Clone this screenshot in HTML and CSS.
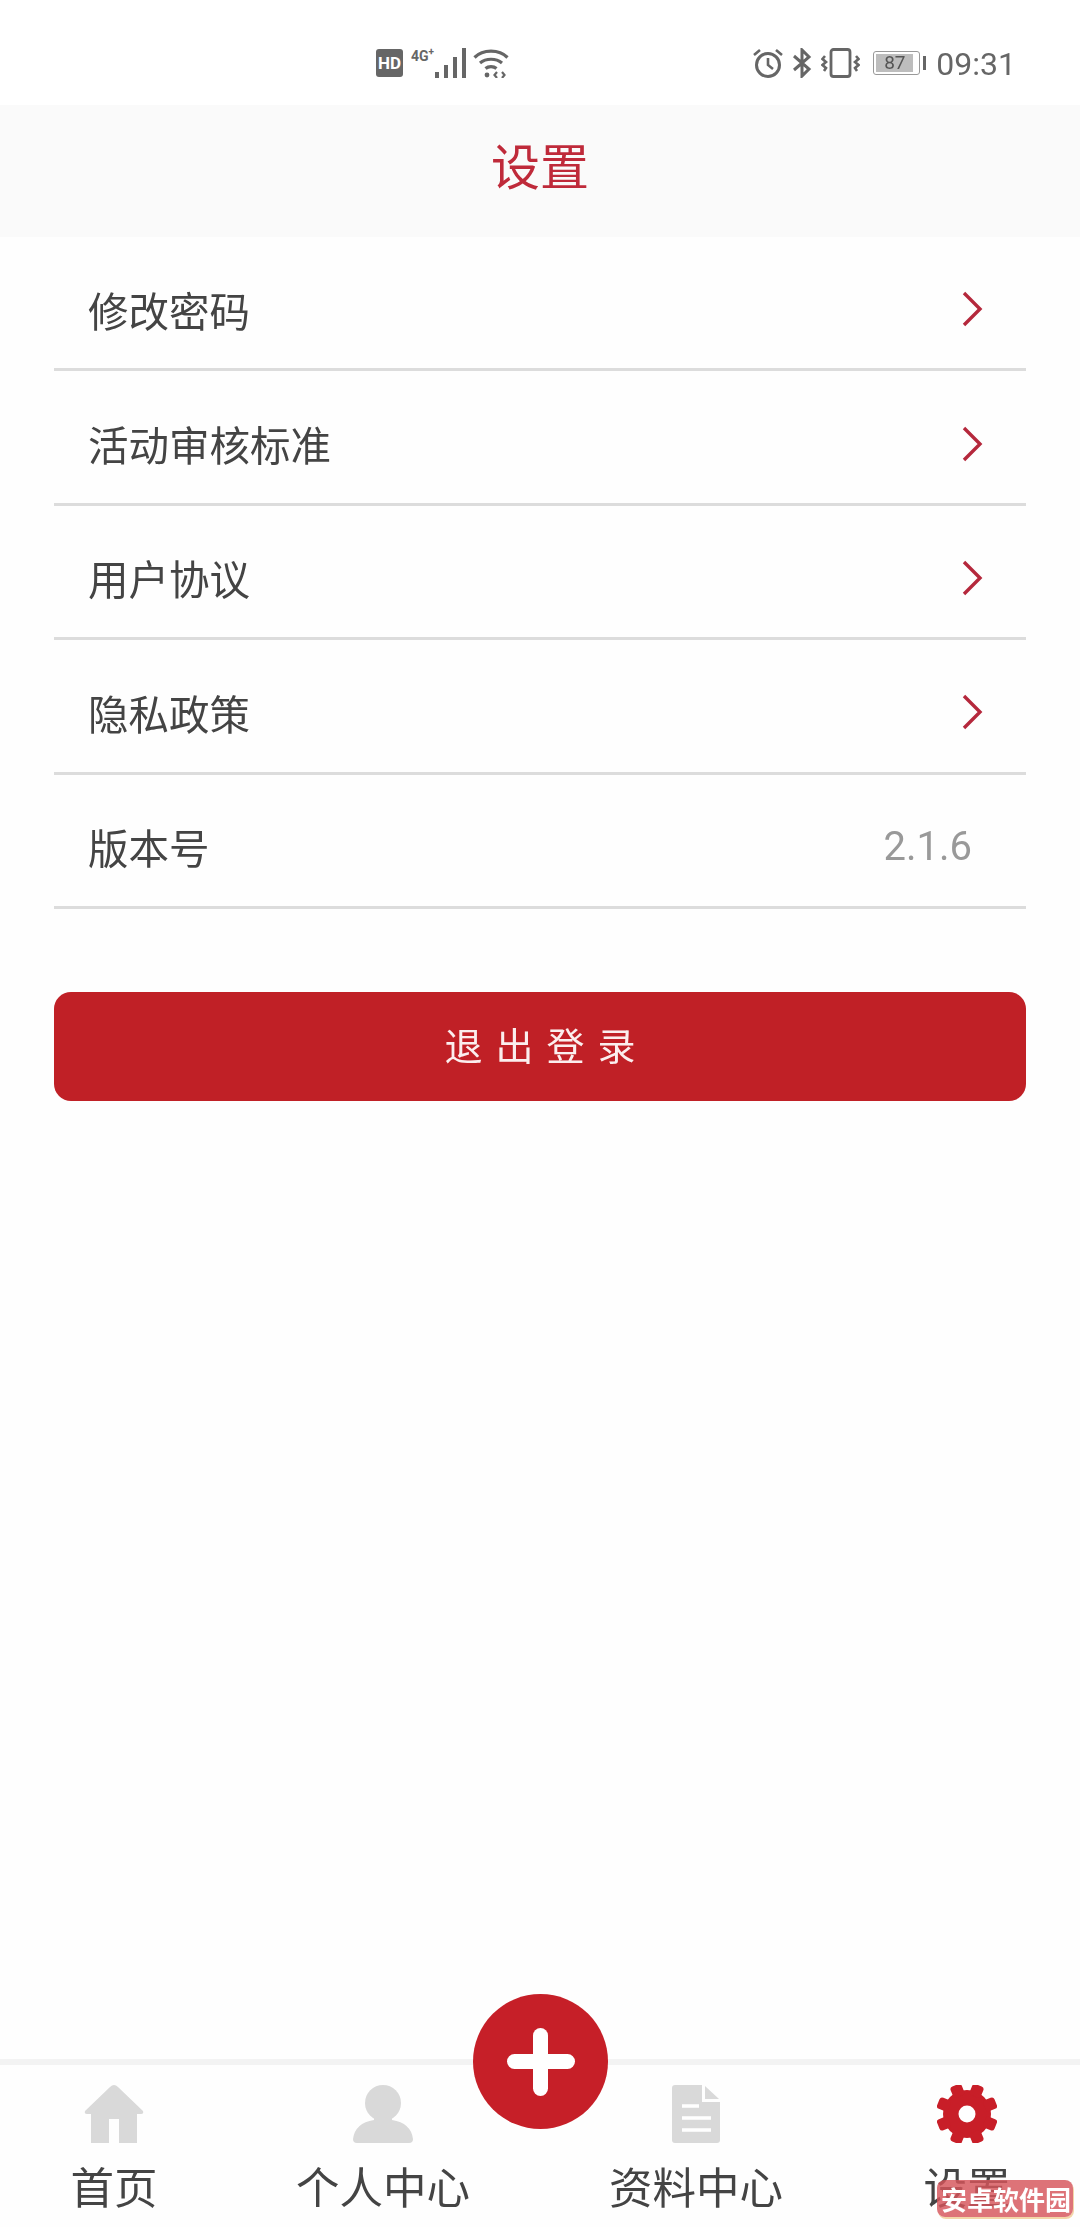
FILE: index.html
```html
<!DOCTYPE html>
<html lang="zh-CN">
<head>
<meta charset="UTF-8">
<meta name="viewport" content="width=device-width, initial-scale=1.0">
<title>设置</title>
<link rel="stylesheet" href="styles.css">
</head>
<body>

<div class="screen">
  <div class="status-bar">
    <div class="status-left">
      <span class="hd-badge">HD</span>
      <span class="net-type">4G<sup>+</sup></span>
      <svg class="signal" width="32" height="30" viewBox="0 0 32 30">
        <rect x="0" y="24" width="4" height="6"/>
        <rect x="9" y="17" width="4" height="13"/>
        <rect x="18" y="9" width="4" height="21"/>
        <rect x="27" y="0" width="4" height="30"/>
      </svg>
      <svg class="wifi" width="36" height="30" viewBox="0 0 36 30" fill="none" stroke="#666" stroke-width="3.2">
        <path d="M1.5 9.5 C10 1 26 1 34.5 9.5"/>
        <path d="M7 15 C13 10 23 10 29 15"/>
        <path d="M12.5 20.5 C15.5 18 20.5 18 23.5 20.5"/>
        <circle cx="14" cy="27" r="2.4" fill="#666" stroke="none"/>
        <path d="M24 24 L21.5 27 L24 30 M29 24 L31.5 27 L29 30" stroke-width="2.2"/>
      </svg>
    </div>
    <div class="status-right">
      <svg width="32" height="30" viewBox="0 0 32 30" fill="none" stroke="#666" stroke-width="3">
        <circle cx="16" cy="17" r="11.5"/>
        <path d="M16 10 V17 L21 21" stroke-width="2.6"/>
        <path d="M2 7 L8 2 M30 7 L24 2" stroke-width="2.6"/>
      </svg>
      <svg class="bt" width="20" height="30" viewBox="0 0 20 30" fill="none" stroke="#666" stroke-width="3">
        <path d="M2 8 L17 21 L10 28 V2 L17 9 L2 22"/>
      </svg>
      <svg class="vib" width="39" height="30" viewBox="0 0 39 30" fill="none" stroke="#666" stroke-width="2.6">
        <rect x="10" y="1.5" width="19" height="27" rx="2.5" stroke-width="2.8"/>
        <path d="M4 8 L1.5 11 L5 14 L1.5 17 L5 20 L3 23"/>
        <path d="M35 8 L37.5 11 L34 14 L37.5 17 L34 20 L36 23"/>
      </svg>
      <div class="battery">
        <div class="battery-body"><span class="battery-level">87</span></div>
        <div class="battery-nub"></div>
      </div>
      <span class="clock">09:31</span>
    </div>
  </div>

  <div class="header">
    <h2>设置</h2>
  </div>

  <div class="menu">
    <div class="menu-row">
      <span>修改密码</span>
      <svg class="arrow" width="22" height="36" viewBox="0 0 22 36"><path d="M3 2 L19 18 L3 34"/></svg>
    </div>
    <div class="menu-row">
      <span>活动审核标准</span>
      <svg class="arrow" width="22" height="36" viewBox="0 0 22 36"><path d="M3 2 L19 18 L3 34"/></svg>
    </div>
    <div class="menu-row">
      <span>用户协议</span>
      <svg class="arrow" width="22" height="36" viewBox="0 0 22 36"><path d="M3 2 L19 18 L3 34"/></svg>
    </div>
    <div class="menu-row">
      <span>隐私政策</span>
      <svg class="arrow" width="22" height="36" viewBox="0 0 22 36"><path d="M3 2 L19 18 L3 34"/></svg>
    </div>
    <div class="menu-row version-row">
      <span>版本号</span>
      <span class="version">2.1.6</span>
    </div>
  </div>

  <button class="logout" type="button">退出登录</button>

  <div class="tabbar">
    <div class="tab">
      <svg width="60" height="58" viewBox="0 0 60 58" fill="#d9d9d9">
        <path d="M30 0 Q32 0 34 2 L59 26 Q60 29 57 29 L53 29 V58 H35 V34 H25 V58 H7 V29 L3 29 Q0 29 1 26 L26 2 Q28 0 30 0 Z"/>
      </svg>
      <span>首页</span>
    </div>
    <div class="tab">
      <svg width="60" height="58" viewBox="0 0 60 58" fill="#d9d9d9">
        <circle cx="30" cy="18" r="18"/>
        <path d="M21 30 H39 V35 Q58 38 60 54 Q60 58 56 58 H4 Q0 58 0 54 Q2 38 21 35 Z"/>
      </svg>
      <span>个人中心</span>
    </div>
    <div class="tab">
      <svg width="48" height="58" viewBox="0 0 48 58">
        <path fill="#d9d9d9" d="M3 0 H30 V17 H48 V55 Q48 58 45 58 H3 Q0 58 0 55 V3 Q0 0 3 0 Z"/>
        <path fill="#d9d9d9" d="M33 1 L47 14 H33 Z"/>
        <path stroke="#fff" stroke-width="3.5" d="M10 21 H27 M10 33 H39 M10 45 H39"/>
      </svg>
      <span>资料中心</span>
    </div>
    <div class="tab tab-active">
      <svg width="60" height="58" viewBox="0 0 60 58" fill="#c81e28">
        <circle cx="30" cy="29" r="24"/>
        <rect x="24" y="-2" width="12" height="12" rx="3" transform="rotate(22.5 30 29)"/>
        <rect x="24" y="-2" width="12" height="12" rx="3" transform="rotate(67.5 30 29)"/>
        <rect x="24" y="-2" width="12" height="12" rx="3" transform="rotate(112.5 30 29)"/>
        <rect x="24" y="-2" width="12" height="12" rx="3" transform="rotate(157.5 30 29)"/>
        <rect x="24" y="-2" width="12" height="12" rx="3" transform="rotate(202.5 30 29)"/>
        <rect x="24" y="-2" width="12" height="12" rx="3" transform="rotate(247.5 30 29)"/>
        <rect x="24" y="-2" width="12" height="12" rx="3" transform="rotate(292.5 30 29)"/>
        <rect x="24" y="-2" width="12" height="12" rx="3" transform="rotate(337.5 30 29)"/>
        <circle cx="30" cy="29" r="8.5" fill="#fff"/>
      </svg>
      <span>设置</span>
    </div>
  </div>

  <!-- floating add button sits over the tab bar -->
  <div class="fab">
    <div class="fab-plus"></div>
  </div>

  <div class="watermark">安卓软件园</div>
</div>

</body>
</html>
```

FILE: styles.css
```css
body {
  font-family: "Noto Sans CJK SC", "Noto Sans", sans-serif;
  background-color: #fefefe;
  color: #444444;
  margin: 0;
  padding: 0;
}

.screen {
  position: relative;
  width: 1080px;
  height: 2227px;
  display: flex;
  flex-direction: column;
  overflow: hidden;
  filter: blur(0.6px);
}

.status-bar {
  height: 105px;
  box-sizing: border-box;
  padding: 48px 64px 0 376px;
  display: flex;
  justify-content: space-between;
  align-items: flex-start;
  background-color: #ffffff;
}

.status-left,
.status-right {
  display: flex;
  align-items: flex-start;
}

.status-right {
  gap: 9px;
}

.hd-badge {
  width: 27px;
  height: 28px;
  margin-top: 1px;
  background-color: #666666;
  border-radius: 3px;
  color: #ffffff;
  font-family: "Roboto", sans-serif;
  font-size: 17px;
  font-weight: 700;
  line-height: 28px;
  text-align: center;
}

.net-type {
  margin-left: 8px;
  width: 23px;
  color: #666666;
  font-family: "Roboto", sans-serif;
  font-size: 14px;
  font-weight: 700;
  line-height: 16px;
  white-space: nowrap;
}

.net-type sup {
  font-size: 10px;
  line-height: 0;
}

.signal {
  fill: #666666;
  margin-right: 6px;
  margin-left: 1px;
}

.bt {
  margin-left: -1px;
}

.battery {
  display: flex;
  align-items: center;
  gap: 3px;
  height: 30px;
  margin-left: 4px;
}

.battery-body {
  width: 47px;
  height: 24px;
  box-sizing: border-box;
  border: 1px solid #999999;
  border-radius: 3px;
  padding: 2px;
}

.battery-level {
  display: block;
  width: 37px;
  height: 18px;
  background-color: #bdbdbd;
  color: #555555;
  font-family: "Roboto", sans-serif;
  font-size: 19px;
  line-height: 18px;
  text-align: center;
}

.battery-nub {
  width: 3px;
  height: 14px;
  background-color: #666666;
}

.clock {
  margin: -4px 0 0 1px;
  color: #666666;
  font-family: "Roboto", sans-serif;
  font-size: 32px;
  line-height: 40px;
}

.header {
  height: 132px;
  box-sizing: border-box;
  padding-bottom: 14px;
  display: flex;
  align-items: center;
  justify-content: center;
  background-color: #fafafa;
}

.header h2 {
  margin: 0;
  color: #bf2a3a;
  font-size: 49px;
  font-weight: 400;
  line-height: 60px;
}

.menu {
  margin: 0 54px;
}

.menu-row {
  height: 134.4px;
  box-sizing: border-box;
  padding: 13px 43px 0 34px;
  display: flex;
  align-items: center;
  justify-content: space-between;
  border-bottom: 3px solid #dcdcdc;
  font-size: 40.5px;
}

.version-row {
  padding-right: 54px;
}

.version {
  color: #999999;
  font-family: "Roboto", sans-serif;
  font-size: 40px;
}

.arrow {
  fill: none;
  stroke: #b5283c;
  stroke-width: 3.4px;
}

.logout {
  display: block;
  width: 972px;
  height: 109px;
  margin: 83px 54px 0;
  padding: 0 0 6px 13px;
  border: none;
  border-radius: 17px;
  background-color: #c02026;
  color: #fbeeee;
  font-family: inherit;
  font-size: 38px;
  letter-spacing: 13px;
}

.tabbar {
  margin-top: auto;
  height: 168px;
  box-sizing: border-box;
  padding-top: 20px;
  border-top: 6px solid #f3f3f3;
  display: grid;
  grid-template-columns: 228px 310px 316px 226px;
}

.tab {
  display: flex;
  flex-direction: column;
  align-items: center;
  font-size: 43.5px;
  line-height: 60px;
  gap: 13px;
}

.tab svg {
  display: block;
}

.fab {
  position: absolute;
  left: 473px;
  top: 1994px;
  width: 135px;
  height: 135px;
  border-radius: 50%;
  background-color: #c61f28;
  display: flex;
  align-items: center;
  justify-content: center;
}

.fab-plus {
  position: relative;
  width: 68px;
  height: 15px;
  border-radius: 8px;
  background-color: #ffffff;
}

.fab-plus::after {
  content: "";
  position: absolute;
  left: 26.5px;
  top: -26.5px;
  width: 15px;
  height: 68px;
  border-radius: 8px;
  background-color: #ffffff;
}

.watermark {
  position: absolute;
  left: 937px;
  top: 2180px;
  width: 136px;
  height: 37px;
  box-sizing: border-box;
  padding-left: 4px;
  border-radius: 8px;
  background-color: rgba(214, 84, 90, 0.82);
  box-shadow: 1px 2px 0 #f3d6a8;
  color: #ffffff;
  font-size: 26px;
  font-weight: 700;
  line-height: 37px;
  white-space: nowrap;
}
```
